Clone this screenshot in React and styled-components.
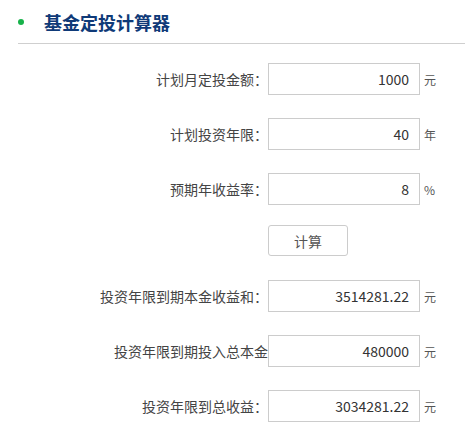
import React from "react";
import styled, { createGlobalStyle } from "styled-components";

const Global = createGlobalStyle`
  html, body { margin: 0; padding: 0; background: #fff; }
  body { font-family: "Noto Sans CJK SC", "Noto Sans", sans-serif; color: #333; }
  * { box-sizing: border-box; }
`;

const Page = styled.div`
  width: 465px;
  height: 429px;
  overflow: hidden;
`;

const Header = styled.div`
  margin-left: 18px;
  height: 44px;
  border-bottom: 1px solid #cfcfcf;
  display: flex;
  align-items: center;
`;

const Dot = styled.span`
  width: 6px;
  height: 6px;
  border-radius: 50%;
  background: #17b24a;
  margin-right: 20px;
  margin-top: 1px;
`;

const Title = styled.h2`
  margin: 0;
  font-size: 18px;
  font-weight: bold;
  color: #0f3a78;
  line-height: 20px;
  margin-top: 1px;
`;

const Form = styled.div`
  display: flex;
  flex-direction: column;
  gap: 23px;
  padding-top: 19px;
`;

const Row = styled.div`
  display: flex;
  align-items: center;
  height: 32px;
`;

const Label = styled.label`
  width: 268px;
  flex: none;
  text-align: right;
  white-space: nowrap;
  font-size: 14px;
  color: #444;
`;

const Field = styled.input`
  width: 152px;
  height: 32px;
  border: 1px solid #cccccc;
  padding: 0 10px 0 6px;
  text-align: right;
  font-family: "Noto Sans CJK SC", "Noto Sans", sans-serif;
  font-size: 14px;
  color: #333;
  outline: none;
  background: #fff;
`;

const Unit = styled.span`
  margin-left: 4px;
  font-size: 12px;
  color: #555;
`;

const ButtonRow = styled.div`
  display: flex;
  padding-left: 268px;
  margin: -3px 0 1px;
`;

const CalcButton = styled.button`
  width: 80px;
  height: 31px;
  border: 1px solid #cccccc;
  border-radius: 3px;
  background: #fff;
  font-family: "Noto Sans CJK SC", "Noto Sans", sans-serif;
  font-size: 14px;
  color: #555;
  cursor: pointer;
`;

const inputs = [
  { label: "计划月定投金额：", value: "1000", unit: "元" },
  { label: "计划投资年限：", value: "40", unit: "年" },
  { label: "预期年收益率：", value: "8", unit: "%" },
];

const results = [
  { label: "投资年限到期本金收益和：", value: "3514281.22", unit: "元" },
  { label: "投资年限到期投入总本金", value: "480000", unit: "元" },
  { label: "投资年限到总收益：", value: "3034281.22", unit: "元" },
];

function FormRow({ label, value, unit }) {
  return (
    <Row>
      <Label>{label}</Label>
      <Field defaultValue={value} />
      <Unit>{unit}</Unit>
    </Row>
  );
}

export default function App() {
  return (
    <Page>
      <Global />
      <Header>
        <Dot />
        <Title>基金定投计算器</Title>
      </Header>
      <Form>
        {inputs.map((r) => (
          <FormRow key={r.label} {...r} />
        ))}
        <ButtonRow>
          <CalcButton>计算</CalcButton>
        </ButtonRow>
        {results.map((r) => (
          <FormRow key={r.label} {...r} />
        ))}
      </Form>
    </Page>
  );
}
